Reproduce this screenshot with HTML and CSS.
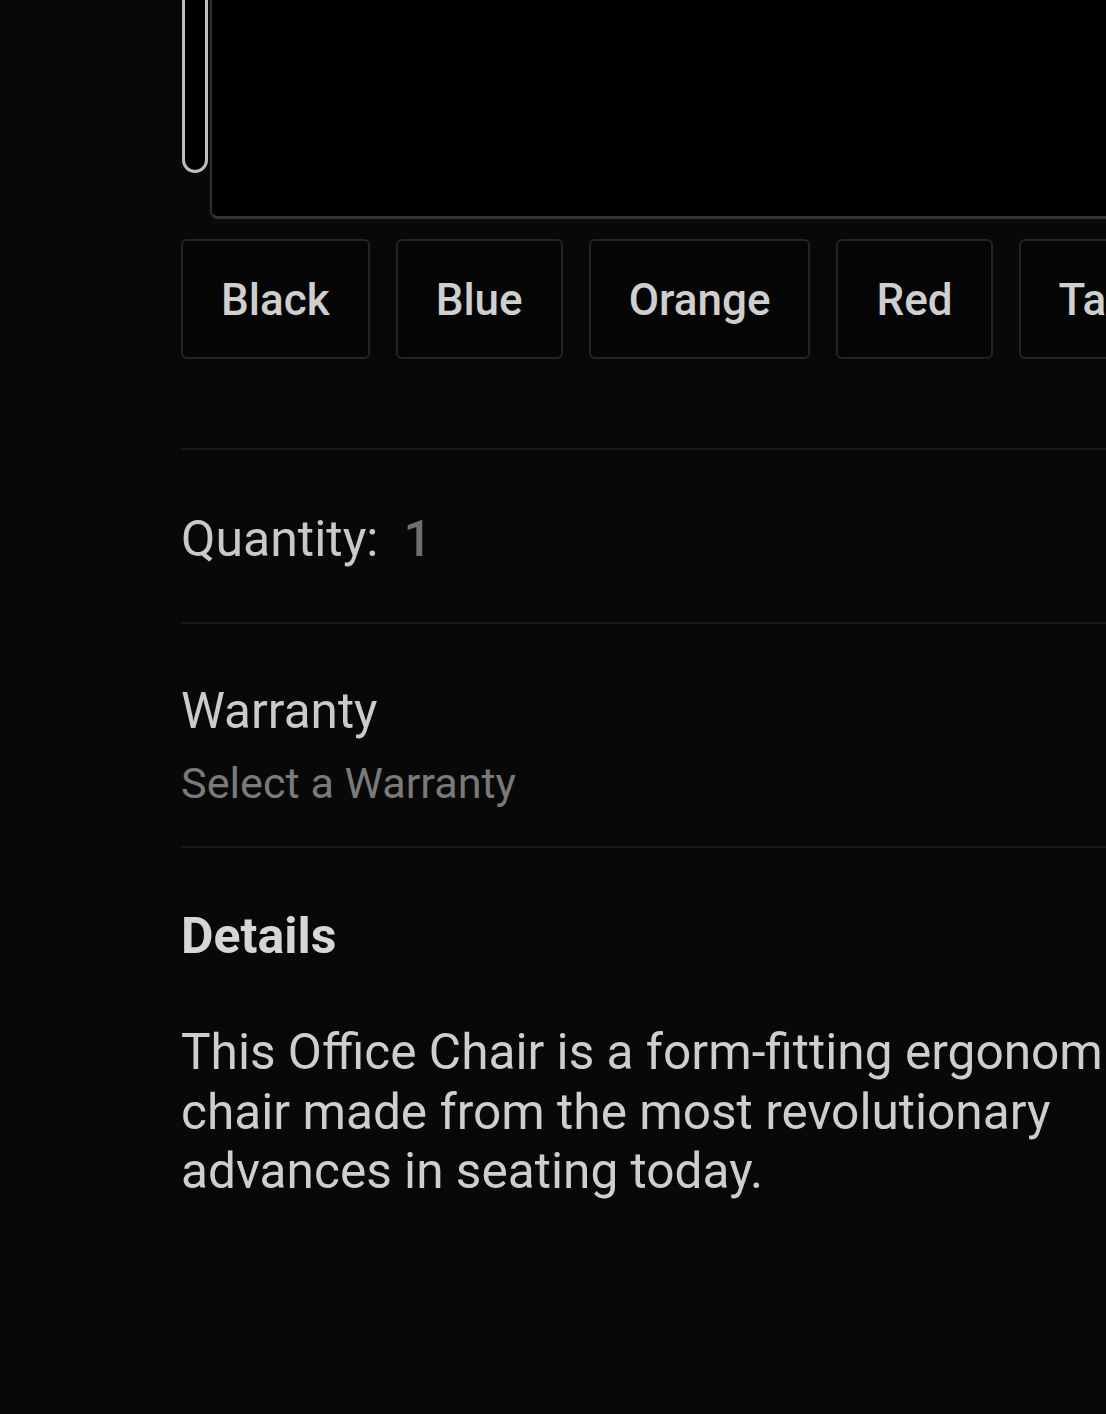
FILE: index.html
```html
<!DOCTYPE html>
<html lang="en">
<head>
<meta charset="utf-8">
<title>Office Chair</title>
<link rel="stylesheet" href="styles.css">
</head>
<body>
<main class="page">
  <div class="gallery">
    <div class="thumb-pill"></div>
    <div class="image-frame"></div>
  </div>
  <div class="swatches">
    <button class="chip">Black</button>
    <button class="chip">Blue</button>
    <button class="chip">Orange</button>
    <button class="chip">Red</button>
    <button class="chip">Tan</button>
  </div>
  <section class="row quantity">
    <span class="q-label">Quantity:</span><span class="q-value">1</span>
  </section>
  <section class="row warranty">
    <div class="w-title">Warranty</div>
    <div class="w-sub">Select a Warranty</div>
  </section>
  <section class="details">
    <h2 class="d-title">Details</h2>
    <p class="d-text">This Office Chair is a form-fitting ergonomic chair made from the most revolutionary advances in seating today.</p>
  </section>
</main>
</body>
</html>
```
FILE: styles.css
```css
html, body {
  margin: 0;
  padding: 0;
  background: #080808;
  overflow: hidden;
}
body {
  width: 1106px;
  height: 1414px;
  font-family: Roboto, "Noto Sans", sans-serif;
  color: #cbcbcb;
}
.page {
  width: 1106px;
  overflow: hidden;
}
.gallery {
  display: flex;
  align-items: flex-start;
  height: 220px;
  margin-left: 182px;
}
.thumb-pill {
  flex: 0 0 26px;
  height: 200px;
  margin-top: -27px;
  box-sizing: border-box;
  border: 3px solid #bdbdbd;
  border-radius: 13px;
  background: #000;
}
.image-frame {
  flex: 1;
  margin-left: 2px;
  margin-top: -20px;
  height: 239px;
  box-sizing: border-box;
  background: #000;
  border-left: 2px solid #2e2e2e;
  border-bottom: 3px solid #333;
  border-bottom-left-radius: 8px;
  margin-right: -20px;
  box-shadow: 0 3px 6px rgba(255,255,255,0.04);
}
.swatches {
  display: flex;
  gap: 26px;
  margin-top: 19px;
  padding-left: 181px;
  white-space: nowrap;
  width: 2000px;
}
.chip {
  flex: none;
  height: 120px;
  padding: 2px 38px 0;
  background: #050505;
  border: 2px solid #242424;
  border-radius: 6px;
  color: #cfcfcf;
  font-family: Roboto, sans-serif;
  font-weight: 500;
  font-size: 44px;
  line-height: 1;
}
.row {
  margin-left: 181px;
  border-top: 2px solid #1b1b1b;
}
.quantity {
  margin-top: 89px;
  padding: 59px 0 53px;
  display: flex;
  gap: 25px;
  line-height: 60px;
  font-size: 50px;
}
.q-label { color: #c9c9c9; }
.q-value { color: #6f6f6f; font-weight: 500; }
.warranty {
  padding: 57px 0 32px;
  border-bottom: 2px solid #1b1b1b;
}
.w-title {
  font-size: 49.5px;
  line-height: 60px;
  color: #cbcbcb;
}
.w-sub {
  margin-top: 13px;
  font-size: 43.2px;
  line-height: 60px;
  color: #7a7a7a;
}
.details {
  margin-left: 181px;
  padding-top: 58px;
}
.d-title {
  margin: 0;
  font-size: 50px;
  line-height: 60px;
  font-weight: 700;
  color: #d6d6d6;
}
.d-text {
  margin: 57px 0 0;
  width: 1010px;
  font-size: 49.6px;
  line-height: 59.5px;
  color: #cecece;
}
```
